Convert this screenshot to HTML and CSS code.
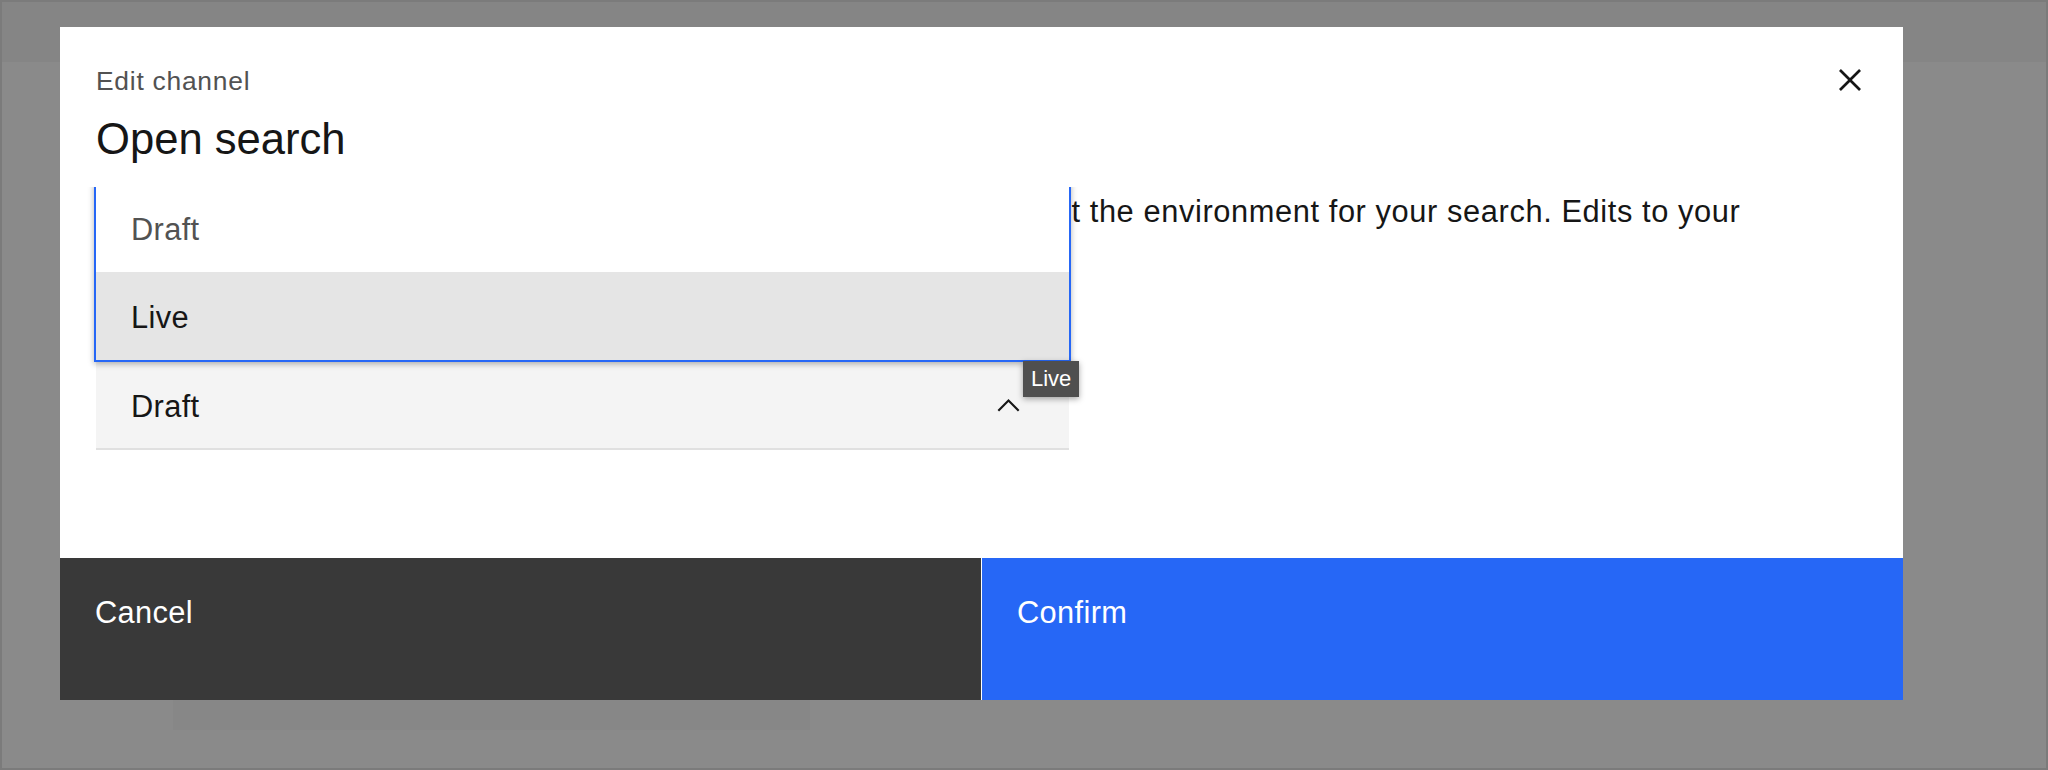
FILE: index.html
```html
<!DOCTYPE html>
<html lang="en">
<head>
<meta charset="utf-8">
<title>Edit channel</title>
<link rel="stylesheet" href="styles.css">
</head>
<body>
<div class="app">
  <header class="app-header"></header>
  <main class="app-main">
    <div class="app-block"></div>
  </main>
</div>
<div class="overlay">
  <div class="modal" role="dialog" aria-labelledby="modal-title">
    <div class="modal-header">
      <p class="modal-label">Edit channel</p>
      <h2 class="modal-title" id="modal-title">Open search</h2>
      <button class="modal-close" aria-label="Close">
        <svg viewBox="0 0 32 32" width="44" height="44" aria-hidden="true"><path d="M24 9.4L22.6 8 16 14.6 9.4 8 8 9.4 14.6 16 8 22.6 9.4 24 16 17.4 22.6 24 24 22.6 17.4 16 24 9.4z"/></svg>
      </button>
    </div>
    <div class="modal-content">
      <p class="modal-text">Set where this channel runs. Use the dropdown menu below to select the environment for your search. Edits to your channel apply once you confirm.</p>
      <div class="dropdown">
        <ul class="menu" role="listbox">
          <li class="menu-item">Draft</li>
          <li class="menu-item menu-item--hover">Live</li>
        </ul>
        <div class="field">
          <span class="field-value">Draft</span>
          <svg class="field-chevron" viewBox="0 0 16 16" width="35" height="35" aria-hidden="true"><path d="M8 5L13 10 12.3 10.7 8 6.4 3.7 10.7 3 10z"/></svg>
        </div>
        <div class="tooltip">Live</div>
      </div>
    </div>
    <div class="modal-footer">
      <button class="btn btn--secondary">Cancel</button>
      <button class="btn btn--primary">Confirm</button>
    </div>
  </div>
</div>
</body>
</html>
```
FILE: styles.css
```css
* { box-sizing: border-box; }

html, body {
  margin: 0;
  padding: 0;
  width: 100%;
  height: 100%;
  overflow: hidden;
  font-family: "Liberation Sans", Arial, sans-serif;
}

.app {
  height: 100vh;
  border: 2px solid #7b7b7b;
  background: #8a8a8a;
  display: flex;
  flex-direction: column;
}

.app-header {
  height: 60px;
  background: #858585;
  flex: none;
}

.app-main {
  flex: 1;
  display: flex;
  align-items: flex-end;
  padding: 0 0 38px 171px;
}

.app-block {
  width: 637px;
  height: 200px;
  background: #878787;
}

.overlay {
  position: fixed;
  inset: 0;
  display: flex;
  align-items: flex-start;
  padding: 27px 0 0 60px;
}

.modal {
  position: relative;
  width: 1843px;
  height: 673px;
  background: #ffffff;
  display: flex;
  flex-direction: column;
}

.modal-header {
  padding: 36.7px 106px 0 36px;
  margin-bottom: 16.4px;
  flex: none;
}

.modal-label {
  margin: 0 0 10.2px;
  font-size: 26.4px;
  line-height: 35.2px;
  letter-spacing: 0.75px;
  color: #525252;
}

.modal-title {
  margin: 0;
  font-size: 43.6px;
  line-height: 61.6px;
  font-weight: 400;
  color: #161616;
}

.modal-close {
  position: absolute;
  top: 31px;
  right: 31px;
  width: 44px;
  height: 44px;
  padding: 0;
  border: 0;
  background: transparent;
  display: flex;
}

.modal-close svg { fill: #161616; }

.modal-content {
  flex: 1;
  overflow: hidden;
  padding: 2.8px 36px 0 36px;
  color: #161616;
}

.modal-text {
  margin: 0 0 84.2px;
  max-width: 1690px;
  font-size: 30.8px;
  line-height: 44px;
  letter-spacing: 0.6px;
}

.dropdown {
  position: relative;
  width: 973px;
}

.field {
  height: 88px;
  background: #f4f4f4;
  border-bottom: 2px solid #e0e0e0;
  display: flex;
  align-items: center;
  justify-content: space-between;
  padding: 4px 43px 0 35px;
  font-size: 30.8px;
  letter-spacing: 0.35px;
  color: #161616;
}

.field-chevron { fill: #161616; margin-top: -4px; }

.menu {
  position: absolute;
  left: -2px;
  right: -2px;
  bottom: 100%;
  margin: 0;
  padding: 0;
  list-style: none;
  background: #ffffff;
  border: 2px solid #2667f6;
  box-shadow: 0 2px 6px rgba(0, 0, 0, 0.3);
}

.menu-item {
  height: 88px;
  display: flex;
  align-items: center;
  padding: 3px 0 0 35px;
  font-size: 30.8px;
  letter-spacing: 0.35px;
  color: #525252;
}

.menu-item--hover {
  background: #e5e5e5;
  color: #161616;
}

.tooltip {
  position: absolute;
  top: -1px;
  left: 927px;
  height: 36px;
  display: flex;
  align-items: center;
  padding: 0 8px;
  background: #4f4f4f;
  color: #ffffff;
  font-size: 22px;
  box-shadow: 0 2px 6px rgba(0, 0, 0, 0.35);
}

.modal-footer {
  flex: none;
  height: 141.6px;
  display: flex;
  gap: 1px;
}

.btn {
  flex: 1;
  border: 0;
  margin: 0;
  padding: 34.6px 0 0 35px;
  text-align: left;
  font-family: inherit;
  font-size: 30.8px;
  line-height: 39.6px;
  letter-spacing: 0.35px;
  color: #ffffff;
  display: flex;
  align-items: flex-start;
}

.btn--secondary { background: #393939; }
.btn--primary { background: #2667f6; }
```
